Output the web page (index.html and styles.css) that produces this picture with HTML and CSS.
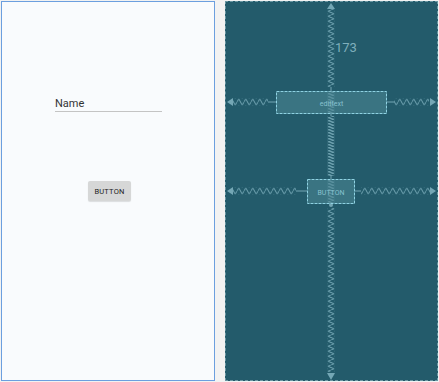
FILE: index.html
```html
<!DOCTYPE html>
<html>
<head>
<meta charset="utf-8">
<link rel="stylesheet" href="styles.css">
</head>
<body>
<div class="stage">
  <div class="design">
    <div class="field">
      <div class="field-text">Name</div>
      <div class="field-line"></div>
    </div>
    <div class="btn">BUTTON</div>
  </div>
  <div class="blueprint">
    <svg class="bp-svg" width="211" height="378" viewBox="227 2 211 378" xmlns="http://www.w3.org/2000/svg">
      <defs>
        <pattern id="zh" patternUnits="userSpaceOnUse" x="0" y="98.5" width="7" height="7">
          <path d="M0,3.5 L1.75,0.5 L5.25,6.5 L7,3.5" fill="none" stroke="#74a7b5" stroke-width="1"/>
        </pattern>
        <pattern id="zh2" patternUnits="userSpaceOnUse" x="0" y="187.5" width="7" height="7">
          <path d="M0,3.5 L1.75,0.5 L5.25,6.5 L7,3.5" fill="none" stroke="#74a7b5" stroke-width="1"/>
        </pattern>
        <pattern id="zv" patternUnits="userSpaceOnUse" x="328.5" y="0" width="7" height="5">
          <path d="M3.5,0 L0.5,1.25 L6.5,3.75 L3.5,5" fill="none" stroke="#74a7b5" stroke-width="1"/>
        </pattern>
        <pattern id="zvd" patternUnits="userSpaceOnUse" x="328.5" y="0" width="7" height="3">
          <path d="M3.5,0 L0.5,0.75 L6.5,2.25 L3.5,3" fill="none" stroke="#74a7b5" stroke-width="1"/>
        </pattern>
      </defs>

      <!-- top vertical -->
      <polygon points="332,3 328,9 336,9" fill="#74a7b5"/>
      <rect x="328.5" y="9" width="7" height="78" fill="url(#zv)"/>
      <line x1="332" y1="87" x2="332" y2="91" stroke="#74a7b5"/>
      <text x="336" y="52" class="dim">173</text>

      <!-- middle vertical -->
      <rect x="328.5" y="116" width="7" height="60" fill="url(#zvd)"/>
      <line x1="332" y1="114" x2="332" y2="116" stroke="#74a7b5"/>
      <line x1="332" y1="176" x2="332" y2="179" stroke="#74a7b5"/>

      <!-- bottom vertical -->
      <circle cx="332" cy="205" r="2" fill="#74a7b5"/>
      <rect x="328.5" y="208" width="7" height="164" fill="url(#zv)"/>
      <polygon points="332,380 328,373 336,373" fill="#74a7b5"/>

      <!-- edittext horizontals -->
      <polygon points="228,102 234,98 234,106" fill="#74a7b5"/>
      <rect x="234" y="98.5" width="35" height="7" fill="url(#zh)"/>
      <line x1="269" y1="102" x2="277" y2="102" stroke="#74a7b5"/>
      <line x1="388" y1="102" x2="395" y2="102" stroke="#74a7b5"/>
      <rect x="395" y="98.5" width="35" height="7" fill="url(#zh)"/>
      <polygon points="437,102 431,98 431,106" fill="#74a7b5"/>

      <!-- button horizontals -->
      <polygon points="228,191 234,187 234,195" fill="#74a7b5"/>
      <rect x="234" y="187.5" width="63" height="7" fill="url(#zh2)"/>
      <line x1="297" y1="191" x2="308" y2="191" stroke="#74a7b5"/>
      <line x1="356" y1="191" x2="362" y2="191" stroke="#74a7b5"/>
      <rect x="362" y="187.5" width="69" height="7" fill="url(#zh2)"/>
      <polygon points="437,191 431,187 431,195" fill="#74a7b5"/>

      <!-- edittext box -->
      <rect x="277.5" y="91.5" width="110" height="22" class="box"/>
      <rect x="328.5" y="91" width="7" height="23" fill="url(#zvd)" opacity="0.6"/>
      <text x="332.5" y="105.5" class="lbl">edittext</text>

      <!-- button box -->
      <rect x="308.5" y="179.5" width="47" height="24" class="box"/>
      <rect x="328.5" y="180" width="7" height="23" fill="url(#zvd)" opacity="0.6"/>
      <text x="332" y="194.5" class="lbl">BUTTON</text>
    </svg>
  </div>
</div>
</body>
</html>
```

FILE: styles.css
```css
html, body {
  margin: 0;
  padding: 0;
  background: #f2f2f2;
  font-family: Roboto, "Liberation Sans", sans-serif;
}

.stage {
  display: flex;
  gap: 10px;
  padding: 1px;
  width: 439px;
  height: 382px;
  box-sizing: border-box;
}

.design {
  width: 214px;
  height: 380px;
  box-sizing: border-box;
  border: 1px solid #6c9fdf;
  background: #f9fbfd;
  display: flex;
  flex-direction: column;
  padding-top: 95px;
  padding-left: 53px;
}

.field {
  width: 107px;
}

.field-text {
  font-size: 11px;
  line-height: 13px;
  color: #333;
}

.field-line {
  height: 1px;
  background: #c4c4c4;
  margin-top: 1px;
}

.btn {
  margin-top: 69px;
  margin-left: 33px;
  width: 43px;
  height: 20px;
  background: #d6d7d7;
  border-radius: 2px;
  box-shadow: 0 1px 1px rgba(0,0,0,0.12);
  font-size: 7.5px;
  color: #222;
  display: flex;
  align-items: center;
  justify-content: center;
  letter-spacing: 0.2px;
}

.blueprint {
  width: 213px;
  height: 380px;
  box-sizing: border-box;
  border: 1px dashed #6a97a3;
  background: #235b6b;
  display: flex;
}

.bp-svg {
  display: block;
}

.dim {
  font-family: Roboto, "Liberation Sans", sans-serif;
  font-size: 13px;
  fill: #7fafbc;
}

.box {
  fill: #3a7482;
  stroke: #8fd2e2;
  stroke-width: 1;
  stroke-dasharray: 3 1;
}

.lbl {
  font-family: Roboto, "Liberation Sans", sans-serif;
  font-size: 7px;
  fill: #87c1cf;
  text-anchor: middle;
}
```
